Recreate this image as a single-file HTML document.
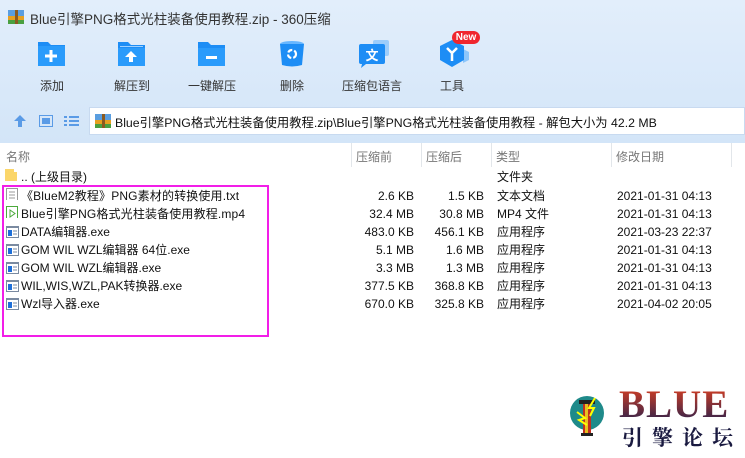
<!DOCTYPE html>
<html><head><meta charset="utf-8"><style>
*{margin:0;padding:0;box-sizing:border-box}
body{width:745px;height:458px;overflow:hidden;background:#fff;font-family:"Liberation Sans","Noto Sans CJK SC",sans-serif;font-size:12px;color:#111;position:relative}
.top{position:absolute;left:0;top:0;width:745px;height:143px;background:linear-gradient(#e2eefb,#d3e5f8)}
.title{position:absolute;left:30px;top:8px;font-size:13.5px;color:#333}
.tb{position:absolute;top:39px;width:80px;text-align:center}
.tb .lbl{position:absolute;top:38px;left:0;width:80px;font-size:12px;color:#333}
.tb svg{position:absolute;left:25px;top:0}
.addr{position:absolute;left:89px;top:107px;width:656px;height:28px;background:#fff;border:1px solid #c8daf0}
.addr span{position:absolute;left:25px;top:5px;font-size:12.3px;color:#111}
.hdr{position:absolute;top:143px;left:0;width:745px;height:25px;background:#fff;color:#777;font-size:12px}
.hdr div{position:absolute;top:5px}
.vl{position:absolute;top:143px;width:1px;height:24px;background:#e2e6ea}
.row{position:absolute;left:0;width:745px;height:18px;font-size:12px;line-height:18px}
.row span{position:absolute;white-space:nowrap}
.r1{right:331px}.r2{right:261px}.ty{left:497px}.dt{left:617px}
.ic{position:absolute;left:6px;top:3px;width:13px;height:12px}
.pink{position:absolute;left:2px;top:185px;width:267px;height:152px;border:2px solid #f21ee8}
</style></head><body>
<div class="top"></div>
<svg style="position:absolute;left:8px;top:9px" width="16" height="16"><rect x="0" y="1" width="16" height="6" fill="#5a9ee0"/><rect x="0" y="7" width="16" height="4" fill="#e6a020"/><rect x="0" y="11" width="16" height="4" fill="#4aa040"/><rect x="7" y="1" width="3" height="14" fill="#8a5a20"/></svg>
<div class="title">Blue引擎PNG格式光柱装备使用教程.zip - 360压缩</div>

<div class="tb" style="left:12px"><svg width="30" height="30"><path d="M1 3h10l3 3h14v21H1z" fill="#1d8df5"/><rect x="1" y="7" width="27" height="20" fill="#2a9bfb"/><path d="M14 11v12M8 17h12" stroke="#fff" stroke-width="3"/></svg><div class="lbl">添加</div></div>
<div class="tb" style="left:92px"><svg width="30" height="30"><path d="M1 3h10l3 3h14v21H1z" fill="#1d8df5"/><rect x="1" y="9" width="27" height="18" fill="#2a9bfb"/><rect x="3" y="7" width="23" height="1" fill="#9dd0ff"/><path d="M14 12l-6 6h4v5h4v-5h4z" fill="#fff"/></svg><div class="lbl">解压到</div></div>
<div class="tb" style="left:172px"><svg width="30" height="30"><path d="M1 3h10l3 3h14v21H1z" fill="#1d8df5"/><rect x="1" y="9" width="27" height="18" fill="#2a9bfb"/><rect x="9" y="17" width="11" height="3" fill="#fff"/></svg><div class="lbl">一键解压</div></div>
<div class="tb" style="left:252px"><svg width="30" height="30"><ellipse cx="15" cy="5" rx="12" ry="3" fill="#66b6ff"/><path d="M3 5h24l-2 21q-10 3-20 0z" fill="#1d8df5"/><circle cx="15" cy="15" r="4" fill="none" stroke="#fff" stroke-width="2.2" stroke-dasharray="5 2"/></svg><div class="lbl">删除</div></div>
<div class="tb" style="left:332px"><svg width="36" height="30"><rect x="16" y="1" width="16" height="16" rx="2" fill="#9ccdfb"/><rect x="2" y="5" width="26" height="20" rx="2" fill="#1d8df5"/><path d="M5 25l-1 4 5-4z" fill="#1d8df5"/><text x="15" y="21" font-size="13" font-weight="bold" fill="#fff" text-anchor="middle" font-family="Noto Sans CJK SC,sans-serif">文</text></svg><div class="lbl">压缩包语言</div></div>
<div class="tb" style="left:412px"><svg width="36" height="30"><path d="M26 10l6 3v8l-6 3z" fill="#8cc6fb"/><path d="M15 1l12 6v14l-12 7-12-7V7z" fill="#1d8df5"/><path d="M10 9l5 5 5-5M15 14v8" stroke="#fff" stroke-width="2.5" fill="none"/></svg><div class="lbl">工具</div><div style="position:absolute;left:40px;top:-8px;width:28px;height:13px;border-radius:7px;background:#f0262e;color:#fff;font-size:10px;font-weight:bold;line-height:13px">New</div></div>

<svg style="position:absolute;left:13px;top:114px" width="14" height="14"><path d="M7 1l6 6H9v6H5V7H1z" fill="#5a9be6"/></svg>
<svg style="position:absolute;left:39px;top:115px" width="14" height="12"><rect x="0.5" y="0.5" width="13" height="11" fill="none" stroke="#5a9be6"/><rect x="3" y="3" width="8" height="6" fill="#5a9be6"/></svg>
<svg style="position:absolute;left:64px;top:115px" width="15" height="12"><g fill="#5a9be6"><rect x="0" y="1" width="3" height="2"/><rect x="5" y="1" width="10" height="2"/><rect x="0" y="5" width="3" height="2"/><rect x="5" y="5" width="10" height="2"/><rect x="0" y="9" width="3" height="2"/><rect x="5" y="9" width="10" height="2"/></g></svg>
<div class="addr"><svg style="position:absolute;left:5px;top:5px" width="16" height="16"><rect x="0" y="1" width="16" height="6" fill="#5a9ee0"/><rect x="0" y="7" width="16" height="4" fill="#e6a020"/><rect x="0" y="11" width="16" height="4" fill="#4aa040"/><rect x="7" y="1" width="3" height="14" fill="#8a5a20"/></svg><span>Blue引擎PNG格式光柱装备使用教程.zip\Blue引擎PNG格式光柱装备使用教程 - 解包大小为 42.2 MB</span></div>

<div class="hdr"><div style="left:6px">名称</div><div style="left:356px">压缩前</div><div style="left:426px">压缩后</div><div style="left:496px">类型</div><div style="left:616px">修改日期</div></div>
<div class="vl" style="left:351px"></div><div class="vl" style="left:421px"></div><div class="vl" style="left:491px"></div><div class="vl" style="left:611px"></div><div class="vl" style="left:731px"></div>

<div class="row" style="top:168px"><svg class="ic" style="left:5px;top:1px" width="12" height="16"><path d="M0 0h9v3h3v13H0z" fill="#fbd66a"/></svg><span style="left:21px">.. (上级目录)</span><span class="ty">文件夹</span></div>
<div class="row" style="top:187px"><svg class="ic" style="top:1px" width="12" height="15"><rect x="0.5" y="0.5" width="11" height="14" fill="#fff" stroke="#999"/><path d="M3 4h6M3 7h6M3 10h6" stroke="#999"/></svg><span style="left:21px;letter-spacing:0.15px">《BlueM2教程》PNG素材的转换使用.txt</span><span class="r1">2.6 KB</span><span class="r2">1.5 KB</span><span class="ty">文本文档</span><span class="dt">2021-01-31 04:13</span></div>
<div class="row" style="top:205px"><svg class="ic" style="top:1px" width="12" height="15"><rect x="0.5" y="0.5" width="11" height="14" fill="#fff" stroke="#4caa3c"/><path d="M4 4l5 3.5-5 3.5z" fill="none" stroke="#4caa3c"/></svg><span style="left:21px;letter-spacing:0.15px">Blue引擎PNG格式光柱装备使用教程.mp4</span><span class="r1">32.4 MB</span><span class="r2">30.8 MB</span><span class="ty">MP4 文件</span><span class="dt">2021-01-31 04:13</span></div>
<div class="row" style="top:223px"><svg class="ic" width="13" height="12"><rect x="0.5" y="0.5" width="12" height="11" fill="#fff" stroke="#7a8aa0"/><rect x="0" y="0" width="13" height="2" fill="#7a8aa0"/><rect x="2" y="4" width="4" height="6" fill="#1e6fd8"/><path d="M7 5h4M7 8h4" stroke="#7a8aa0"/></svg><span style="left:21px">DATA编辑器.exe</span><span class="r1">483.0 KB</span><span class="r2">456.1 KB</span><span class="ty">应用程序</span><span class="dt">2021-03-23 22:37</span></div>
<div class="row" style="top:241px"><svg class="ic" width="13" height="12"><rect x="0.5" y="0.5" width="12" height="11" fill="#fff" stroke="#7a8aa0"/><rect x="0" y="0" width="13" height="2" fill="#7a8aa0"/><rect x="2" y="4" width="4" height="6" fill="#1e6fd8"/><path d="M7 5h4M7 8h4" stroke="#7a8aa0"/></svg><span style="left:21px">GOM WIL WZL编辑器 64位.exe</span><span class="r1">5.1 MB</span><span class="r2">1.6 MB</span><span class="ty">应用程序</span><span class="dt">2021-01-31 04:13</span></div>
<div class="row" style="top:259px"><svg class="ic" width="13" height="12"><rect x="0.5" y="0.5" width="12" height="11" fill="#fff" stroke="#7a8aa0"/><rect x="0" y="0" width="13" height="2" fill="#7a8aa0"/><rect x="2" y="4" width="4" height="6" fill="#1e6fd8"/><path d="M7 5h4M7 8h4" stroke="#7a8aa0"/></svg><span style="left:21px">GOM WIL WZL编辑器.exe</span><span class="r1">3.3 MB</span><span class="r2">1.3 MB</span><span class="ty">应用程序</span><span class="dt">2021-01-31 04:13</span></div>
<div class="row" style="top:277px"><svg class="ic" width="13" height="12"><rect x="0.5" y="0.5" width="12" height="11" fill="#fff" stroke="#7a8aa0"/><rect x="0" y="0" width="13" height="2" fill="#7a8aa0"/><rect x="2" y="4" width="4" height="6" fill="#1e6fd8"/><path d="M7 5h4M7 8h4" stroke="#7a8aa0"/></svg><span style="left:21px">WIL,WIS,WZL,PAK转换器.exe</span><span class="r1">377.5 KB</span><span class="r2">368.8 KB</span><span class="ty">应用程序</span><span class="dt">2021-01-31 04:13</span></div>
<div class="row" style="top:295px"><svg class="ic" width="13" height="12"><rect x="0.5" y="0.5" width="12" height="11" fill="#fff" stroke="#7a8aa0"/><rect x="0" y="0" width="13" height="2" fill="#7a8aa0"/><rect x="2" y="4" width="4" height="6" fill="#1e6fd8"/><path d="M7 5h4M7 8h4" stroke="#7a8aa0"/></svg><span style="left:21px">Wzl导入器.exe</span><span class="r1">670.0 KB</span><span class="r2">325.8 KB</span><span class="ty">应用程序</span><span class="dt">2021-04-02 20:05</span></div>
<div class="pink"></div>

<svg style="position:absolute;left:565px;top:390px" width="50" height="55"><circle cx="22" cy="23" r="17" fill="#1f8a8a"/><rect x="18" y="12" width="8" height="32" fill="#c03020"/><rect x="20" y="12" width="3" height="32" fill="#e8c020"/><rect x="14" y="10" width="16" height="4" fill="#222"/><path d="M30 8l-6 10 5 0-4 8M12 22l8 6-6 2 8 5" stroke="#ff0" stroke-width="2" fill="none"/><rect x="16" y="43" width="12" height="3" fill="#222"/></svg>
<div style="position:absolute;left:619px;top:385px;font-family:'Liberation Serif',serif;font-weight:bold;font-size:39px;line-height:40px;color:#5a3a50;background:linear-gradient(#e04020,#202050);-webkit-background-clip:text;-webkit-text-fill-color:transparent;letter-spacing:1px">BLUE</div>
<div style="position:absolute;left:622px;top:425px;font-family:'Noto Serif CJK SC',serif;font-weight:bold;font-size:21px;line-height:24px;color:#1a1a40;letter-spacing:9px">引擎论坛</div>
</body></html>
